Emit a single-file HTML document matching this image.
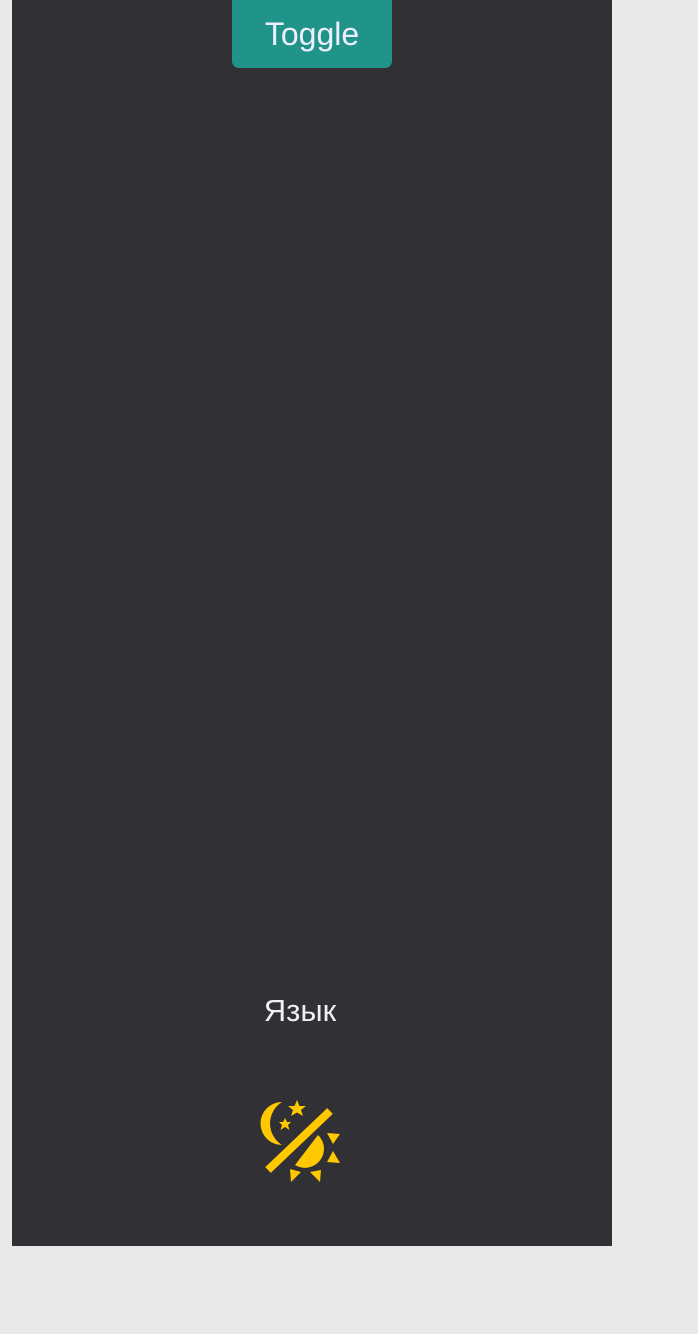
<!DOCTYPE html>
<html><head><meta charset="utf-8"><style>
html,body{margin:0;padding:0;background:#e9e9e9;width:698px;height:1334px;overflow:hidden;font-family:"Liberation Sans",sans-serif}
.side{position:absolute;left:12px;top:0;width:600px;height:1246px;background:#313035}
.btn{position:absolute;left:232px;top:0;width:160px;height:68px;background:#21948a;border-radius:0 0 7px 7px;color:#eef;font-size:32px;text-align:center;line-height:68px}
.lang{position:absolute;left:200px;width:200px;top:993px;text-align:center;color:#f0f0f0;font-size:31px}
svg{position:absolute;left:0;top:0}
</style></head><body>
<div class="side"></div>
<div class="btn">Toggle</div>
<div class="lang">Язык</div>
<svg width="698" height="1334" fill="#ffc800">
<path d="M282 1102 A21.5 21.5 0 0 0 282 1145 A25.3 25.3 0 0 1 282 1102Z"/>
<polygon points="297,1100 299.5,1106 306,1106 301,1110 303,1116 297,1112.5 291,1116 293,1110 288,1106 294.5,1106"/>
<polygon points="285,1118 287,1122 291,1122 288,1125 289.5,1130 285,1127 280.5,1130 282,1125 279,1122 283,1122"/>
<line x1="268" y1="1170" x2="330" y2="1111" stroke="#ffc800" stroke-width="8"/>
<path d="M318 1135 A19 19 0 0 1 295 1165 Z"/>
<polygon points="327,1133 340,1134 333,1144"/>
<polygon points="333,1151 340,1163 327,1162"/>
<polygon points="290,1169 301,1172 291,1182"/>
<polygon points="310,1172 321,1170 320,1182"/>
</svg>
</body></html>
